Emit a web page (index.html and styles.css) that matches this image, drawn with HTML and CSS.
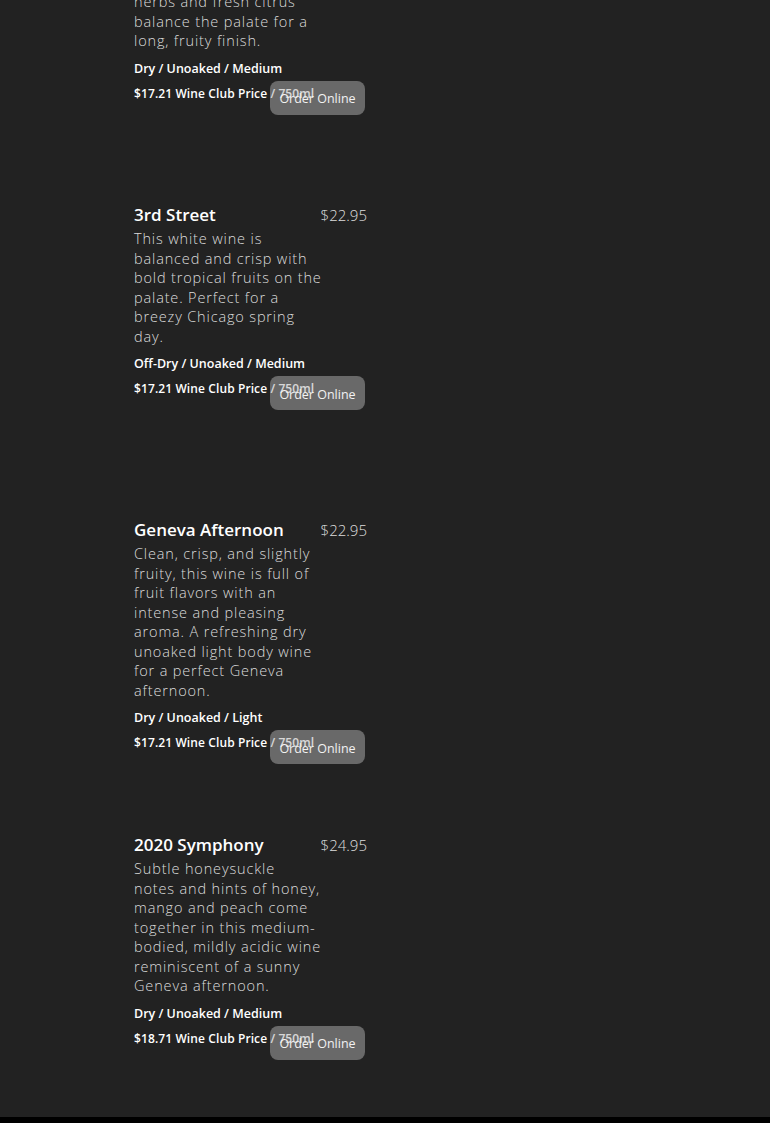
FILE: index.html
```html
<!DOCTYPE html>
<html lang="en">
<head>
<meta charset="utf-8">
<title>White Wines</title>
<link rel="stylesheet" href="styles.css">
</head>
<body>
<main class="menu">
  <section class="item">
    <div class="info">
      <div class="head"><h3 class="name">Lakefront White</h3><span class="price">$20.95</span></div>
      <p class="desc">Bright and refreshing, aromatic notes of green apple and juicy orchard peaches. Gentle savory herbs and fresh citrus balance the palate for a long, fruity finish.</p>
      <p class="tags">Dry / Unoaked / Medium</p>
      <p class="club">$17.21 Wine Club Price / 750ml</p>
      <a class="order" href="#">Order Online</a>
    </div>
  </section>
  <section class="item">
    <div class="info">
      <div class="head"><h3 class="name">3rd Street</h3><span class="price">$22.95</span></div>
      <p class="desc">This white wine is balanced and crisp with bold tropical fruits on the palate. Perfect for a breezy Chicago spring day.</p>
      <p class="tags">Off-Dry / Unoaked / Medium</p>
      <p class="club">$17.21 Wine Club Price / 750ml</p>
      <a class="order" href="#">Order Online</a>
    </div>
  </section>
  <section class="item">
    <div class="info">
      <div class="head"><h3 class="name">Geneva Afternoon</h3><span class="price">$22.95</span></div>
      <p class="desc">Clean, crisp, and slightly fruity, this wine is full of fruit flavors with an intense and pleasing aroma. A refreshing dry unoaked light body wine for a perfect Geneva afternoon.</p>
      <p class="tags">Dry / Unoaked / Light</p>
      <p class="club">$17.21 Wine Club Price / 750ml</p>
      <a class="order" href="#">Order Online</a>
    </div>
  </section>
  <section class="item">
    <div class="info">
      <div class="head"><h3 class="name">2020 Symphony</h3><span class="price">$24.95</span></div>
      <p class="desc">Subtle honeysuckle notes&nbsp;and hints of honey, mango and peach come together in this medium-bodied, mildly acidic wine reminiscent of a sunny Geneva afternoon.</p>
      <p class="tags">Dry / Unoaked / Medium</p>
      <p class="club">$18.71 Wine Club Price / 750ml</p>
      <a class="order" href="#">Order Online</a>
    </div>
  </section>
</main>
<footer class="footer"></footer>
</body>
</html>
```

FILE: styles.css
```css
html, body {
  margin: 0;
  padding: 0;
  background: #222222;
  font-family: "Open Sans", "Lato", sans-serif;
  color: #dddddd;
}

.menu {
  margin-top: -111px;
  padding: 0 0 11px 134px;
  display: grid;
  row-gap: 43px;
}

.item {
  width: 233px;
  min-height: 272px;
}

.info {
  position: relative;
  width: 233px;
}

.head {
  display: flex;
  justify-content: space-between;
  align-items: baseline;
  margin-bottom: 3px;
}

.name {
  margin: 0;
  font-size: 17px;
  line-height: 22px;
  font-weight: 600;
  color: #ffffff;
}

.price {
  font-size: 15px;
  font-weight: 300;
  color: #dddddd;
}

.desc {
  margin: 0;
  width: 190px;
  font-size: 14.5px;
  line-height: 19.5px;
  font-weight: 300;
  letter-spacing: 0.85px;
  color: #dcdcdc;
}

.tags {
  margin: 10px 0 0;
  font-size: 12.5px;
  line-height: 16px;
  font-weight: 600;
  color: #ffffff;
}

.club {
  margin: 9px 0 0;
  font-size: 12px;
  line-height: 16px;
  font-weight: 600;
  color: #ffffff;
  letter-spacing: 0.1px;
}

.order {
  position: absolute;
  right: 2px;
  bottom: -13px;
  box-sizing: border-box;
  width: 95px;
  height: 34px;
  padding-top: 2px;
  display: flex;
  align-items: center;
  justify-content: center;
  border-radius: 8px;
  background: rgba(175, 175, 175, 0.5);
  color: #f2f2f2;
  font-size: 12.5px;
  text-decoration: none;
}

.footer {
  height: 40px;
  background: #000000;
}
```
